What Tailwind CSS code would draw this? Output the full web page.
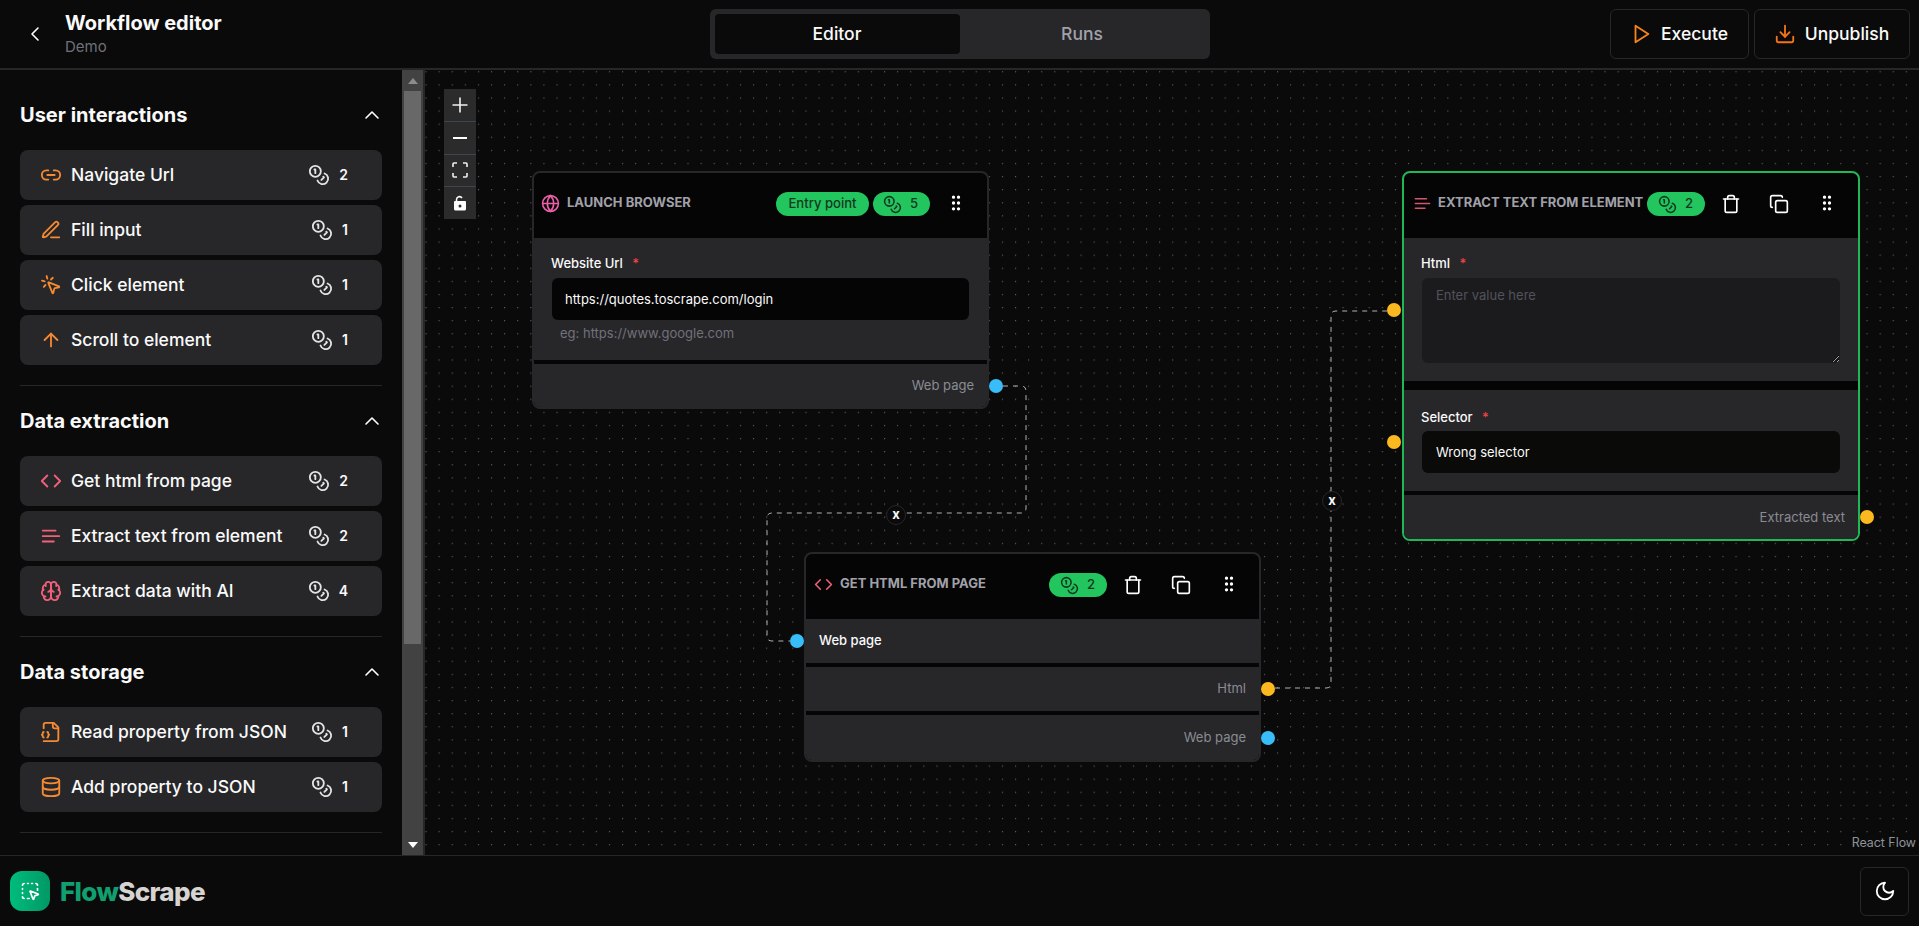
<!DOCTYPE html>
<html lang="en">
<head>
  <meta charset="UTF-8" />
  <meta name="viewport" content="width=device-width, initial-scale=1" />
  <title>FlowScrape - Workflow editor</title>
  <script src="https://cdn.jsdelivr.net/npm/@tailwindcss/browser@4"></script>
</head>
<body class="bg-[#0a0a0a] text-[#fafafa] [font-family:Inter,sans-serif] h-[926px] w-[1919px] overflow-hidden flex flex-col">
  <!-- Icon sprite -->
  <svg class="hidden" xmlns="http://www.w3.org/2000/svg">
    <symbol id="coins" viewBox="0 0 24 24"><circle cx="8" cy="8" r="6"/><path d="M18.09 10.37A6 6 0 1 1 10.34 18"/><path d="M7 6h1v4"/><path d="m16.71 13.88.7.71-2.82 2.82"/></symbol>
    <symbol id="link" viewBox="0 0 24 24"><path d="M9 17H7A5 5 0 0 1 7 7h2"/><path d="M15 7h2a5 5 0 1 1 0 10h-2"/><line x1="8" x2="16" y1="12" y2="12"/></symbol>
    <symbol id="edit" viewBox="0 0 24 24"><path d="M12 20h9"/><path d="M16.376 3.622a1 1 0 0 1 3.002 3.002L7.368 18.635a2 2 0 0 1-.855.506l-2.872.838a.5.5 0 0 1-.62-.62l.838-2.872a2 2 0 0 1 .506-.854z"/></symbol>
    <symbol id="click" viewBox="0 0 24 24"><path d="M14 4.1 12 6"/><path d="m5.1 8-2.9-.8"/><path d="m6 12-1.9 2"/><path d="M7.2 2.2 8 5.1"/><path d="M9.037 9.69a.498.498 0 0 1 .653-.653l11 4.5a.5.5 0 0 1-.074.949l-4.349 1.041a1 1 0 0 0-.74.739l-1.04 4.35a.5.5 0 0 1-.95.074z"/></symbol>
    <symbol id="arrow-up" viewBox="0 0 24 24"><path d="m5 12 7-7 7 7"/><path d="M12 19V5"/></symbol>
    <symbol id="code" viewBox="0 0 24 24"><path d="m16 18 6-6-6-6"/><path d="m8 6-6 6 6 6"/></symbol>
    <symbol id="text" viewBox="0 0 24 24"><path d="M17 6.1H3"/><path d="M21 12.1H3"/><path d="M15.1 18H3"/></symbol>
    <symbol id="brain" viewBox="0 0 24 24"><path d="M12 5a3 3 0 1 0-5.997.125 4 4 0 0 0-2.526 5.77 4 4 0 0 0 .556 6.588A4 4 0 1 0 12 18Z"/><path d="M12 5a3 3 0 1 1 5.997.125 4 4 0 0 1 2.526 5.77 4 4 0 0 1-.556 6.588A4 4 0 1 1 12 18Z"/><path d="M15 13a4.5 4.5 0 0 1-3-4 4.5 4.5 0 0 1-3 4"/><path d="M17.599 6.5a3 3 0 0 0 .399-1.375"/><path d="M6.003 5.125A3 3 0 0 0 6.401 6.5"/><path d="M3.477 10.896a4 4 0 0 1 .585-.396"/><path d="M19.938 10.5a4 4 0 0 1 .585.396"/><path d="M6 18a4 4 0 0 1-1.967-.516"/><path d="M19.967 17.484A4 4 0 0 1 18 18"/></symbol>
    <symbol id="file-json" viewBox="0 0 24 24"><path d="M4 22h14a2 2 0 0 0 2-2V7l-5-5H6a2 2 0 0 0-2 2v4"/><path d="M14 2v4a2 2 0 0 0 2 2h4"/><path d="M4 12a1 1 0 0 0-1 1v1a1 1 0 0 1-1 1 1 1 0 0 1 1 1v1a1 1 0 0 0 1 1"/><path d="M8 18a1 1 0 0 0 1-1v-1a1 1 0 0 1 1-1 1 1 0 0 1-1-1v-1a1 1 0 0 0-1-1"/></symbol>
    <symbol id="database" viewBox="0 0 24 24"><ellipse cx="12" cy="5" rx="9" ry="3"/><path d="M3 5V19A9 3 0 0 0 21 19V5"/><path d="M3 12A9 3 0 0 0 21 12"/></symbol>
    <symbol id="globe" viewBox="0 0 24 24"><circle cx="12" cy="12" r="10"/><path d="M12 2a14.5 14.5 0 0 0 0 20 14.5 14.5 0 0 0 0-20"/><path d="M2 12h20"/></symbol>
    <symbol id="grip" viewBox="0 0 24 24"><circle cx="9" cy="12" r="1"/><circle cx="9" cy="5" r="1"/><circle cx="9" cy="19" r="1"/><circle cx="15" cy="12" r="1"/><circle cx="15" cy="5" r="1"/><circle cx="15" cy="19" r="1"/></symbol>
    <symbol id="trash" viewBox="0 0 24 24"><path d="M3 6h18"/><path d="M19 6v14c0 1-1 2-2 2H7c-1 0-2-1-2-2V6"/><path d="M8 6V4c0-1 1-2 2-2h4c1 0 2 1 2 2v2"/></symbol>
    <symbol id="copy" viewBox="0 0 24 24"><rect width="14" height="14" x="8" y="8" rx="2" ry="2"/><path d="M4 16c-1.1 0-2-.9-2-2V4c0-1.1.9-2 2-2h10c1.1 0 2 .9 2 2"/></symbol>
    <symbol id="chevron-up" viewBox="0 0 24 24"><path d="m18 15-6-6-6 6"/></symbol>
  </svg>

  <!-- Header -->
  <header class="h-[70px] shrink-0 border-b-2 border-[#27272a] grid grid-cols-[1fr_500px_1fr] items-center">
    <div class="flex items-center">
      <svg class="w-6 h-6 ml-[23px] mr-[18px] fill-none stroke-white stroke-[1.6]" stroke-linecap="round" stroke-linejoin="round" viewBox="0 0 24 24"><path d="m15 18-6-6 6-6"/></svg>
      <div class="-mt-[2px]">
        <p class="text-[20px] leading-[28px] font-bold">Workflow editor</p>
        <p class="text-[15px] leading-[20px] text-[#71717a]">Demo</p>
      </div>
    </div>
    <div class="h-[50px] bg-[#27272a] rounded-md p-[5px] flex text-[17.5px] font-medium">
      <div class="w-[245px] bg-[#0a0a0a] rounded-[4px] flex items-center justify-center">Editor</div>
      <div class="flex-1 flex items-center justify-center text-[#a1a1aa]">Runs</div>
    </div>
    <div class="flex justify-end gap-[5px] pr-[9px] text-[17.5px] font-medium">
      <div class="h-[50px] w-[139px] border border-[#27272a] rounded-md flex items-center justify-center gap-[9px] pr-[1px]">
        <svg class="w-[22px] h-[22px] fill-none stroke-[#f58420] stroke-2" stroke-linejoin="round" stroke-linecap="round" viewBox="0 0 24 24"><polygon points="6 3 20 12 6 21 6 3"/></svg>
        Execute
      </div>
      <div class="h-[50px] w-[156px] border border-[#27272a] rounded-md flex items-center justify-center gap-[9px] pr-[1px]">
        <svg class="w-[22px] h-[22px] fill-none stroke-[#f97316] stroke-2" stroke-linejoin="round" stroke-linecap="round" viewBox="0 0 24 24"><path d="M21 15v4a2 2 0 0 1-2 2H5a2 2 0 0 1-2-2v-4"/><polyline points="7 10 12 15 17 10"/><line x1="12" x2="12" y1="15" y2="3"/></svg>
        Unpublish
      </div>
    </div>
  </header>

  <div class="flex-1 flex min-h-0">
    <!-- Sidebar -->
    <aside class="w-[425px] shrink-0 flex border-r-2 border-[#27272a]">
      <div class="w-[402px] overflow-hidden px-5 pt-[10px]">
        <!-- User interactions -->
        <section class="border-b border-[#27272a] pb-5">
          <div class="h-[70px] flex items-center justify-between">
            <h2 class="text-[20px] font-bold">User interactions</h2>
            <svg class="w-6 h-6 -mr-[2px] fill-none stroke-white stroke-[1.6]" stroke-linecap="round" stroke-linejoin="round"><use href="#chevron-up"/></svg>
          </div>
          <div class="flex flex-col gap-[5px]">
            <div class="h-[50px] bg-[#27272a] rounded-lg flex items-center pl-5 pr-[34px]">
              <svg class="w-[22px] h-[22px] fill-none stroke-[#f58a32] stroke-2" stroke-linecap="round" stroke-linejoin="round"><use href="#link"/></svg>
              <span class="ml-[9px] pt-px text-[17.5px] font-medium flex-1">Navigate Url</span>
              <svg class="w-[22px] h-[22px] fill-none stroke-[#e4e4e7] stroke-2" stroke-linecap="round" stroke-linejoin="round"><use href="#coins"/></svg>
              <span class="ml-[9px] text-sm font-semibold">2</span>
            </div>
            <div class="h-[50px] bg-[#27272a] rounded-lg flex items-center pl-5 pr-[34px]">
              <svg class="w-[22px] h-[22px] fill-none stroke-[#f58a32] stroke-2" stroke-linecap="round" stroke-linejoin="round"><use href="#edit"/></svg>
              <span class="ml-[9px] pt-px text-[17.5px] font-medium flex-1">Fill input</span>
              <svg class="w-[22px] h-[22px] fill-none stroke-[#e4e4e7] stroke-2" stroke-linecap="round" stroke-linejoin="round"><use href="#coins"/></svg>
              <span class="ml-[9px] text-sm font-semibold">1</span>
            </div>
            <div class="h-[50px] bg-[#27272a] rounded-lg flex items-center pl-5 pr-[34px]">
              <svg class="w-[22px] h-[22px] fill-none stroke-[#f58a32] stroke-2" stroke-linecap="round" stroke-linejoin="round"><use href="#click"/></svg>
              <span class="ml-[9px] pt-px text-[17.5px] font-medium flex-1">Click element</span>
              <svg class="w-[22px] h-[22px] fill-none stroke-[#e4e4e7] stroke-2" stroke-linecap="round" stroke-linejoin="round"><use href="#coins"/></svg>
              <span class="ml-[9px] text-sm font-semibold">1</span>
            </div>
            <div class="h-[50px] bg-[#27272a] rounded-lg flex items-center pl-5 pr-[34px]">
              <svg class="w-[22px] h-[22px] fill-none stroke-[#f58a32] stroke-2" stroke-linecap="round" stroke-linejoin="round"><use href="#arrow-up"/></svg>
              <span class="ml-[9px] pt-px text-[17.5px] font-medium flex-1">Scroll to element</span>
              <svg class="w-[22px] h-[22px] fill-none stroke-[#e4e4e7] stroke-2" stroke-linecap="round" stroke-linejoin="round"><use href="#coins"/></svg>
              <span class="ml-[9px] text-sm font-semibold">1</span>
            </div>
          </div>
        </section>

        <!-- Data extraction -->
        <section class="border-b border-[#27272a] pb-5">
          <div class="h-[70px] flex items-center justify-between">
            <h2 class="text-[20px] font-bold">Data extraction</h2>
            <svg class="w-6 h-6 -mr-[2px] fill-none stroke-white stroke-[1.6]" stroke-linecap="round" stroke-linejoin="round"><use href="#chevron-up"/></svg>
          </div>
          <div class="flex flex-col gap-[5px]">
            <div class="h-[50px] bg-[#27272a] rounded-lg flex items-center pl-5 pr-[34px]">
              <svg class="w-[22px] h-[22px] fill-none stroke-[#f1607a] stroke-2" stroke-linecap="round" stroke-linejoin="round"><use href="#code"/></svg>
              <span class="ml-[9px] pt-px text-[17.5px] font-medium flex-1">Get html from page</span>
              <svg class="w-[22px] h-[22px] fill-none stroke-[#e4e4e7] stroke-2" stroke-linecap="round" stroke-linejoin="round"><use href="#coins"/></svg>
              <span class="ml-[9px] text-sm font-semibold">2</span>
            </div>
            <div class="h-[50px] bg-[#27272a] rounded-lg flex items-center pl-5 pr-[34px]">
              <svg class="w-[22px] h-[22px] fill-none stroke-[#f1607a] stroke-2" stroke-linecap="round" stroke-linejoin="round"><use href="#text"/></svg>
              <span class="ml-[9px] pt-px text-[17.5px] font-medium flex-1 whitespace-nowrap">Extract text from element</span>
              <svg class="w-[22px] h-[22px] fill-none stroke-[#e4e4e7] stroke-2" stroke-linecap="round" stroke-linejoin="round"><use href="#coins"/></svg>
              <span class="ml-[9px] text-sm font-semibold">2</span>
            </div>
            <div class="h-[50px] bg-[#27272a] rounded-lg flex items-center pl-5 pr-[34px]">
              <svg class="w-[22px] h-[22px] fill-none stroke-[#f1607a] stroke-2" stroke-linecap="round" stroke-linejoin="round"><use href="#brain"/></svg>
              <span class="ml-[9px] pt-px text-[17.5px] font-medium flex-1">Extract data with AI</span>
              <svg class="w-[22px] h-[22px] fill-none stroke-[#e4e4e7] stroke-2" stroke-linecap="round" stroke-linejoin="round"><use href="#coins"/></svg>
              <span class="ml-[9px] text-sm font-semibold">4</span>
            </div>
          </div>
        </section>

        <!-- Data storage -->
        <section class="border-b border-[#27272a] pb-5">
          <div class="h-[70px] flex items-center justify-between">
            <h2 class="text-[20px] font-bold">Data storage</h2>
            <svg class="w-6 h-6 -mr-[2px] fill-none stroke-white stroke-[1.6]" stroke-linecap="round" stroke-linejoin="round"><use href="#chevron-up"/></svg>
          </div>
          <div class="flex flex-col gap-[5px]">
            <div class="h-[50px] bg-[#27272a] rounded-lg flex items-center pl-5 pr-[34px]">
              <svg class="w-[22px] h-[22px] fill-none stroke-[#f58a32] stroke-2" stroke-linecap="round" stroke-linejoin="round"><use href="#file-json"/></svg>
              <span class="ml-[9px] pt-px text-[17.5px] font-medium flex-1 whitespace-nowrap">Read property from JSON</span>
              <svg class="w-[22px] h-[22px] fill-none stroke-[#e4e4e7] stroke-2" stroke-linecap="round" stroke-linejoin="round"><use href="#coins"/></svg>
              <span class="ml-[9px] text-sm font-semibold">1</span>
            </div>
            <div class="h-[50px] bg-[#27272a] rounded-lg flex items-center pl-5 pr-[34px]">
              <svg class="w-[22px] h-[22px] fill-none stroke-[#f58a32] stroke-2" stroke-linecap="round" stroke-linejoin="round"><use href="#database"/></svg>
              <span class="ml-[9px] pt-px text-[17.5px] font-medium flex-1">Add property to JSON</span>
              <svg class="w-[22px] h-[22px] fill-none stroke-[#e4e4e7] stroke-2" stroke-linecap="round" stroke-linejoin="round"><use href="#coins"/></svg>
              <span class="ml-[9px] text-sm font-semibold">1</span>
            </div>
          </div>
        </section>
      </div>

      <!-- Scrollbar -->
      <div class="w-[21px] bg-[#424242] flex flex-col">
        <div class="h-[21px] flex items-center justify-center">
          <svg class="w-[10px] h-[6px] fill-[#8c8c8c]" viewBox="0 0 10 6"><polygon points="5 0 10 6 0 6"/></svg>
        </div>
        <div class="mx-[2px] h-[553px] bg-[#686868]"></div>
        <div class="flex-1"></div>
        <div class="h-[21px] flex items-center justify-center">
          <svg class="w-[10px] h-[6px] fill-white" viewBox="0 0 10 6"><polygon points="0 0 10 0 5 6"/></svg>
        </div>
      </div>
    </aside>

    <!-- Canvas -->
    <main class="relative flex-1 overflow-hidden">
      <svg class="absolute inset-0 w-full h-full" xmlns="http://www.w3.org/2000/svg">
        <defs>
          <pattern id="dots" x="0.5" y="1.2" width="13.1" height="13.1" patternUnits="userSpaceOnUse"><circle cx="0.6" cy="0.6" r="0.55" fill="#77777e"/></pattern>
        </defs>
        <rect width="100%" height="100%" fill="url(#dots)"/>
        <g transform="translate(-425 -70)" fill="none" stroke="#b1b1b7" stroke-width="1" stroke-dasharray="5">
          <path d="M1003 386H1021Q1026 386 1026 391V508Q1026 513 1021 513H772Q767 513 767 518V636Q767 641 772 641H790"/>
          <path d="M1275 688H1326Q1331 688 1331 683V316Q1331 311 1336 311H1388"/>
        </g>
      </svg>

      <!-- Edge delete buttons -->
      <div class="absolute left-[461px] top-[435px] w-5 h-5 rounded-full bg-[#0a0a0a] border border-[#27272a] flex items-center justify-center text-[13px] font-bold leading-none pb-[2px]">x</div>
      <div class="absolute left-[897px] top-[421px] w-5 h-5 rounded-full bg-[#0a0a0a] border border-[#27272a] flex items-center justify-center text-[13px] font-bold leading-none pb-[2px]">x</div>

      <!-- Zoom controls -->
      <div class="absolute left-[19px] top-[19px] w-[32px] bg-[#2b2b2b] flex flex-col divide-y divide-[#3c4552]">
        <div class="h-[33px] flex items-center justify-center">
          <svg class="w-[16px] h-[16px] stroke-[#f0f0f0] stroke-[1.6]" viewBox="0 0 16 16"><path d="M8 0.5V15.5M0.5 8H15.5"/></svg>
        </div>
        <div class="h-[33px] flex items-center justify-center">
          <svg class="w-[16px] h-[16px] stroke-white stroke-2" viewBox="0 0 16 16"><path d="M1 8H15"/></svg>
        </div>
        <div class="h-[32px] flex items-center justify-center">
          <svg class="w-[16px] h-[16px] -mt-[2px] fill-none stroke-[#f0f0f0] stroke-[1.6]" viewBox="0 0 16 16"><path d="M1 5V2Q1 1 2 1H5M11 1H14Q15 1 15 2V5M15 11V14Q15 15 14 15H11M5 15H2Q1 15 1 14V11"/></svg>
        </div>
        <div class="h-[32px] flex items-center justify-center">
          <svg class="w-[14px] h-[16px] -mt-[1px]" viewBox="0 0 14 16"><path class="fill-none stroke-white stroke-[1.5]" d="M3.5 6V4.500A3 3 0 0 1 9 3"/><path class="fill-white" fill-rule="evenodd" d="M2 6H12A1 1 0 0 1 13 7V14A1.500 1.500 0 0 1 11.500 15.500H2.500A1.500 1.500 0 0 1 1 14V7A1 1 0 0 1 2 6ZM7 9.500A1.500 1.500 0 1 0 7 12.500A1.500 1.500 0 1 0 7 9.500Z"/></svg>
        </div>
      </div>

      <!-- Launch browser node -->
      <div class="absolute left-[107px] top-[101px] w-[457px] rounded-lg border-2 border-[#27272a] bg-[#050505] flex flex-col gap-[4px]">
        <div class="h-[65px] -mb-[4px] pt-[9px] pl-[7px] pr-[9px]">
          <div class="h-[44px] flex items-center justify-between">
            <div class="flex items-center gap-[7px] -mt-[2px]">
              <svg class="w-[19px] h-[19px] fill-none stroke-[#ec5fa8] stroke-2" stroke-linecap="round" stroke-linejoin="round"><use href="#globe"/></svg>
              <span class="text-[13px] font-bold uppercase text-[#a1a1aa]">Launch browser</span>
            </div>
            <div class="flex items-center gap-[4px]">
              <span class="h-[24px] w-[93px] rounded-full bg-[#22c55e] text-[#14391f] text-[13.1px] font-medium flex items-center justify-center">Entry point</span>
              <span class="h-[24px] w-[57px] rounded-full bg-[#22c55e] text-[#14391f] text-[13.1px] font-medium flex items-center pl-[10px] gap-[8px]">
                <svg class="w-[19px] h-[19px] fill-none stroke-[#14391f] stroke-2" stroke-linecap="round" stroke-linejoin="round"><use href="#coins"/></svg>5
              </span>
              <span class="w-[44px] h-[44px] flex items-center justify-center">
                <svg class="w-5 h-5 -mt-[2px] fill-white stroke-white stroke-2" stroke-linecap="round" stroke-linejoin="round"><use href="#grip"/></svg>
              </span>
            </div>
          </div>
        </div>
        <div class="h-[122px] bg-[#27272a] px-[18px] pt-[16px]">
          <label class="block -ml-px text-[13px] leading-[18px] font-medium">Website Url <span class="ml-[6px] text-[#f04444]">*</span></label>
          <input class="mt-[6px] w-full h-[42px] rounded-md bg-[#050505] px-[13px] text-[13px] outline-none" value="https://quotes.toscrape.com/login" readonly />
          <p class="mt-[4px] pl-[8px] text-[13px] leading-[18px] text-[#71717a]">eg: https://www.google.com</p>
        </div>
        <div class="relative h-[43px] bg-[#27272a] rounded-b-md flex items-center justify-end pr-[13px] text-[13px] text-[#8b8b93]">
          Web page
          <span class="absolute -right-[16px] top-1/2 -translate-y-1/2 w-[14px] h-[14px] rounded-full bg-[#38bdf8]"></span>
        </div>
      </div>

      <!-- Get html node -->
      <div class="absolute left-[379px] top-[482px] w-[457px] rounded-lg border-2 border-[#27272a] bg-[#050505] flex flex-col gap-[4px]">
        <div class="h-[65px] -mb-[4px] pt-[9px] pl-[8px] pr-[8px]">
          <div class="h-[44px] flex items-center justify-between">
            <div class="flex items-center gap-[7px] -mt-[2px]">
              <svg class="w-[19px] h-[19px] fill-none stroke-[#f1607a] stroke-2" stroke-linecap="round" stroke-linejoin="round"><use href="#code"/></svg>
              <span class="text-[13px] font-bold uppercase text-[#a1a1aa]">Get html from page</span>
            </div>
            <div class="flex items-center gap-[4px]">
              <span class="h-[24px] w-[58px] rounded-full bg-[#22c55e] text-[#14391f] text-[13.1px] font-medium flex items-center pl-[11px] gap-[8px]">
                <svg class="w-[19px] h-[19px] fill-none stroke-[#14391f] stroke-2" stroke-linecap="round" stroke-linejoin="round"><use href="#coins"/></svg>2
              </span>
              <span class="w-[44px] h-[44px] flex items-center justify-center">
                <svg class="w-5 h-5 fill-none stroke-white stroke-2" stroke-linecap="round" stroke-linejoin="round"><use href="#trash"/></svg>
              </span>
              <span class="w-[44px] h-[44px] flex items-center justify-center">
                <svg class="w-5 h-5 fill-none stroke-white stroke-2" stroke-linecap="round" stroke-linejoin="round"><use href="#copy"/></svg>
              </span>
              <span class="w-[44px] h-[44px] flex items-center justify-center">
                <svg class="w-5 h-5 -mt-[2px] fill-white stroke-white stroke-2" stroke-linecap="round" stroke-linejoin="round"><use href="#grip"/></svg>
              </span>
            </div>
          </div>
        </div>
        <div class="relative h-[44px] bg-[#27272a] flex items-center pl-[13px] text-[13px] font-medium">
          Web page
          <span class="absolute -left-[16px] top-1/2 -translate-y-1/2 w-[14px] h-[14px] rounded-full bg-[#38bdf8]"></span>
        </div>
        <div class="relative h-[44px] bg-[#27272a] flex items-center justify-end pr-[13px] text-[13px] text-[#8b8b93]">
          Html
          <span class="absolute -right-[16px] top-1/2 -translate-y-1/2 w-[14px] h-[14px] rounded-full bg-[#fbb91f]"></span>
        </div>
        <div class="relative h-[45px] bg-[#27272a] rounded-b-md flex items-center justify-end pr-[13px] text-[13px] text-[#8b8b93]">
          Web page
          <span class="absolute -right-[16px] top-1/2 -translate-y-1/2 w-[14px] h-[14px] rounded-full bg-[#38bdf8]"></span>
        </div>
      </div>

      <!-- Extract text node -->
      <div class="absolute left-[977px] top-[101px] w-[458px] rounded-lg border-2 border-[#1fb757] bg-[#050505] flex flex-col gap-[4px]">
        <div class="h-[65px] -mb-[4px] pt-[9px] pl-[9px] pr-[9px]">
          <div class="h-[44px] flex items-center justify-between">
            <div class="flex items-center gap-[6px] -mt-[2px]">
              <svg class="w-[19px] h-[19px] fill-none stroke-[#d2566c] stroke-2" stroke-linecap="round" stroke-linejoin="round"><use href="#text"/></svg>
              <span class="text-[13px] font-bold uppercase text-[#a1a1aa] whitespace-nowrap">Extract text from element</span>
            </div>
            <div class="flex items-center gap-[4px]">
              <span class="h-[24px] w-[58px] rounded-full bg-[#22c55e] text-[#14391f] text-[13.1px] font-medium flex items-center pl-[11px] gap-[8px]">
                <svg class="w-[19px] h-[19px] fill-none stroke-[#14391f] stroke-2" stroke-linecap="round" stroke-linejoin="round"><use href="#coins"/></svg>2
              </span>
              <span class="w-[44px] h-[44px] flex items-center justify-center">
                <svg class="w-5 h-5 fill-none stroke-white stroke-2" stroke-linecap="round" stroke-linejoin="round"><use href="#trash"/></svg>
              </span>
              <span class="w-[44px] h-[44px] flex items-center justify-center">
                <svg class="w-5 h-5 fill-none stroke-white stroke-2" stroke-linecap="round" stroke-linejoin="round"><use href="#copy"/></svg>
              </span>
              <span class="w-[44px] h-[44px] flex items-center justify-center">
                <svg class="w-5 h-5 -mt-[2px] fill-white stroke-white stroke-2" stroke-linecap="round" stroke-linejoin="round"><use href="#grip"/></svg>
              </span>
            </div>
          </div>
        </div>
        <div class="relative h-[143px] bg-[#27272a] px-[18px] pt-[16px]">
          <label class="block -ml-px text-[13px] leading-[18px] font-medium">Html <span class="ml-[6px] text-[#f04444]">*</span></label>
          <textarea class="block mt-[6px] w-full h-[85px] rounded-md bg-[#1b1b1e] px-[14px] py-[8px] text-[13px] outline-none resize-y placeholder:text-[#52525b]" placeholder="Enter value here"></textarea>
          <span class="absolute -left-[17px] top-1/2 -translate-y-1/2 w-[14px] h-[14px] rounded-full bg-[#fbb91f]"></span>
        </div>
        <div class="relative h-[101px] mt-[5px] bg-[#27272a] px-[18px] pt-[18px]">
          <label class="block -ml-px text-[13px] leading-[18px] font-medium">Selector <span class="ml-[6px] text-[#f04444]">*</span></label>
          <input class="mt-[5px] w-full h-[42px] rounded-md bg-[#0a0a09] px-[14px] text-[13px] outline-none" value="Wrong selector" readonly />
          <span class="absolute -left-[17px] top-[45px] w-[14px] h-[14px] rounded-full bg-[#fbb91f]"></span>
        </div>
        <div class="relative h-[44px] pt-px bg-[#27272a] rounded-b-md flex items-center justify-end pr-[13px] text-[13px] text-[#8b8b93]">
          Extracted text
          <span class="absolute -right-[16px] top-1/2 -translate-y-1/2 w-[14px] h-[14px] rounded-full bg-[#fbb91f]"></span>
        </div>
      </div>

      <!-- Attribution -->
      <span class="absolute right-[3px] bottom-[4px] text-[12.4px] leading-[16px] text-[#8e9398]">React Flow</span>
    </main>
  </div>

  <!-- Footer -->
  <footer class="h-[71px] shrink-0 border-t border-[#27272a] flex items-center justify-between pl-[10px] pr-[10px]">
    <div class="flex items-center gap-[10px]">
      <div class="w-[40px] h-[40px] rounded-xl bg-gradient-to-r from-emerald-500 to-emerald-600 flex items-center justify-center">
        <svg class="w-5 h-5 fill-none stroke-white stroke-2" stroke-linecap="round" stroke-linejoin="round" viewBox="0 0 24 24"><path d="M12.034 12.681a.498.498 0 0 1 .647-.647l9 3.5a.5.5 0 0 1-.033.943l-3.444 1.068a1 1 0 0 0-.66.66l-1.067 3.443a.5.5 0 0 1-.943.033z"/><path d="M5 3a2 2 0 0 0-2 2"/><path d="M19 3a2 2 0 0 1 2 2"/><path d="M5 21a2 2 0 0 1-2-2"/><path d="M9 3h1"/><path d="M9 21h2"/><path d="M14 3h1"/><path d="M3 9v1"/><path d="M21 9v2"/><path d="M3 14v1"/></svg>
      </div>
      <p class="text-[26px] font-extrabold tracking-tight"><span class="text-[#10a070]">Flow</span><span class="text-[#d6d3d1]">Scrape</span></p>
    </div>
    <div class="w-[49px] h-[49px] border border-[#27272a] rounded-md flex items-center justify-center">
      <svg class="w-[22px] h-[22px] fill-none stroke-white stroke-2" stroke-linecap="round" stroke-linejoin="round" viewBox="0 0 24 24"><path d="M12 3a6 6 0 0 0 9 9 9 9 0 1 1-9-9Z"/></svg>
    </div>
  </footer>
</body>
</html>
